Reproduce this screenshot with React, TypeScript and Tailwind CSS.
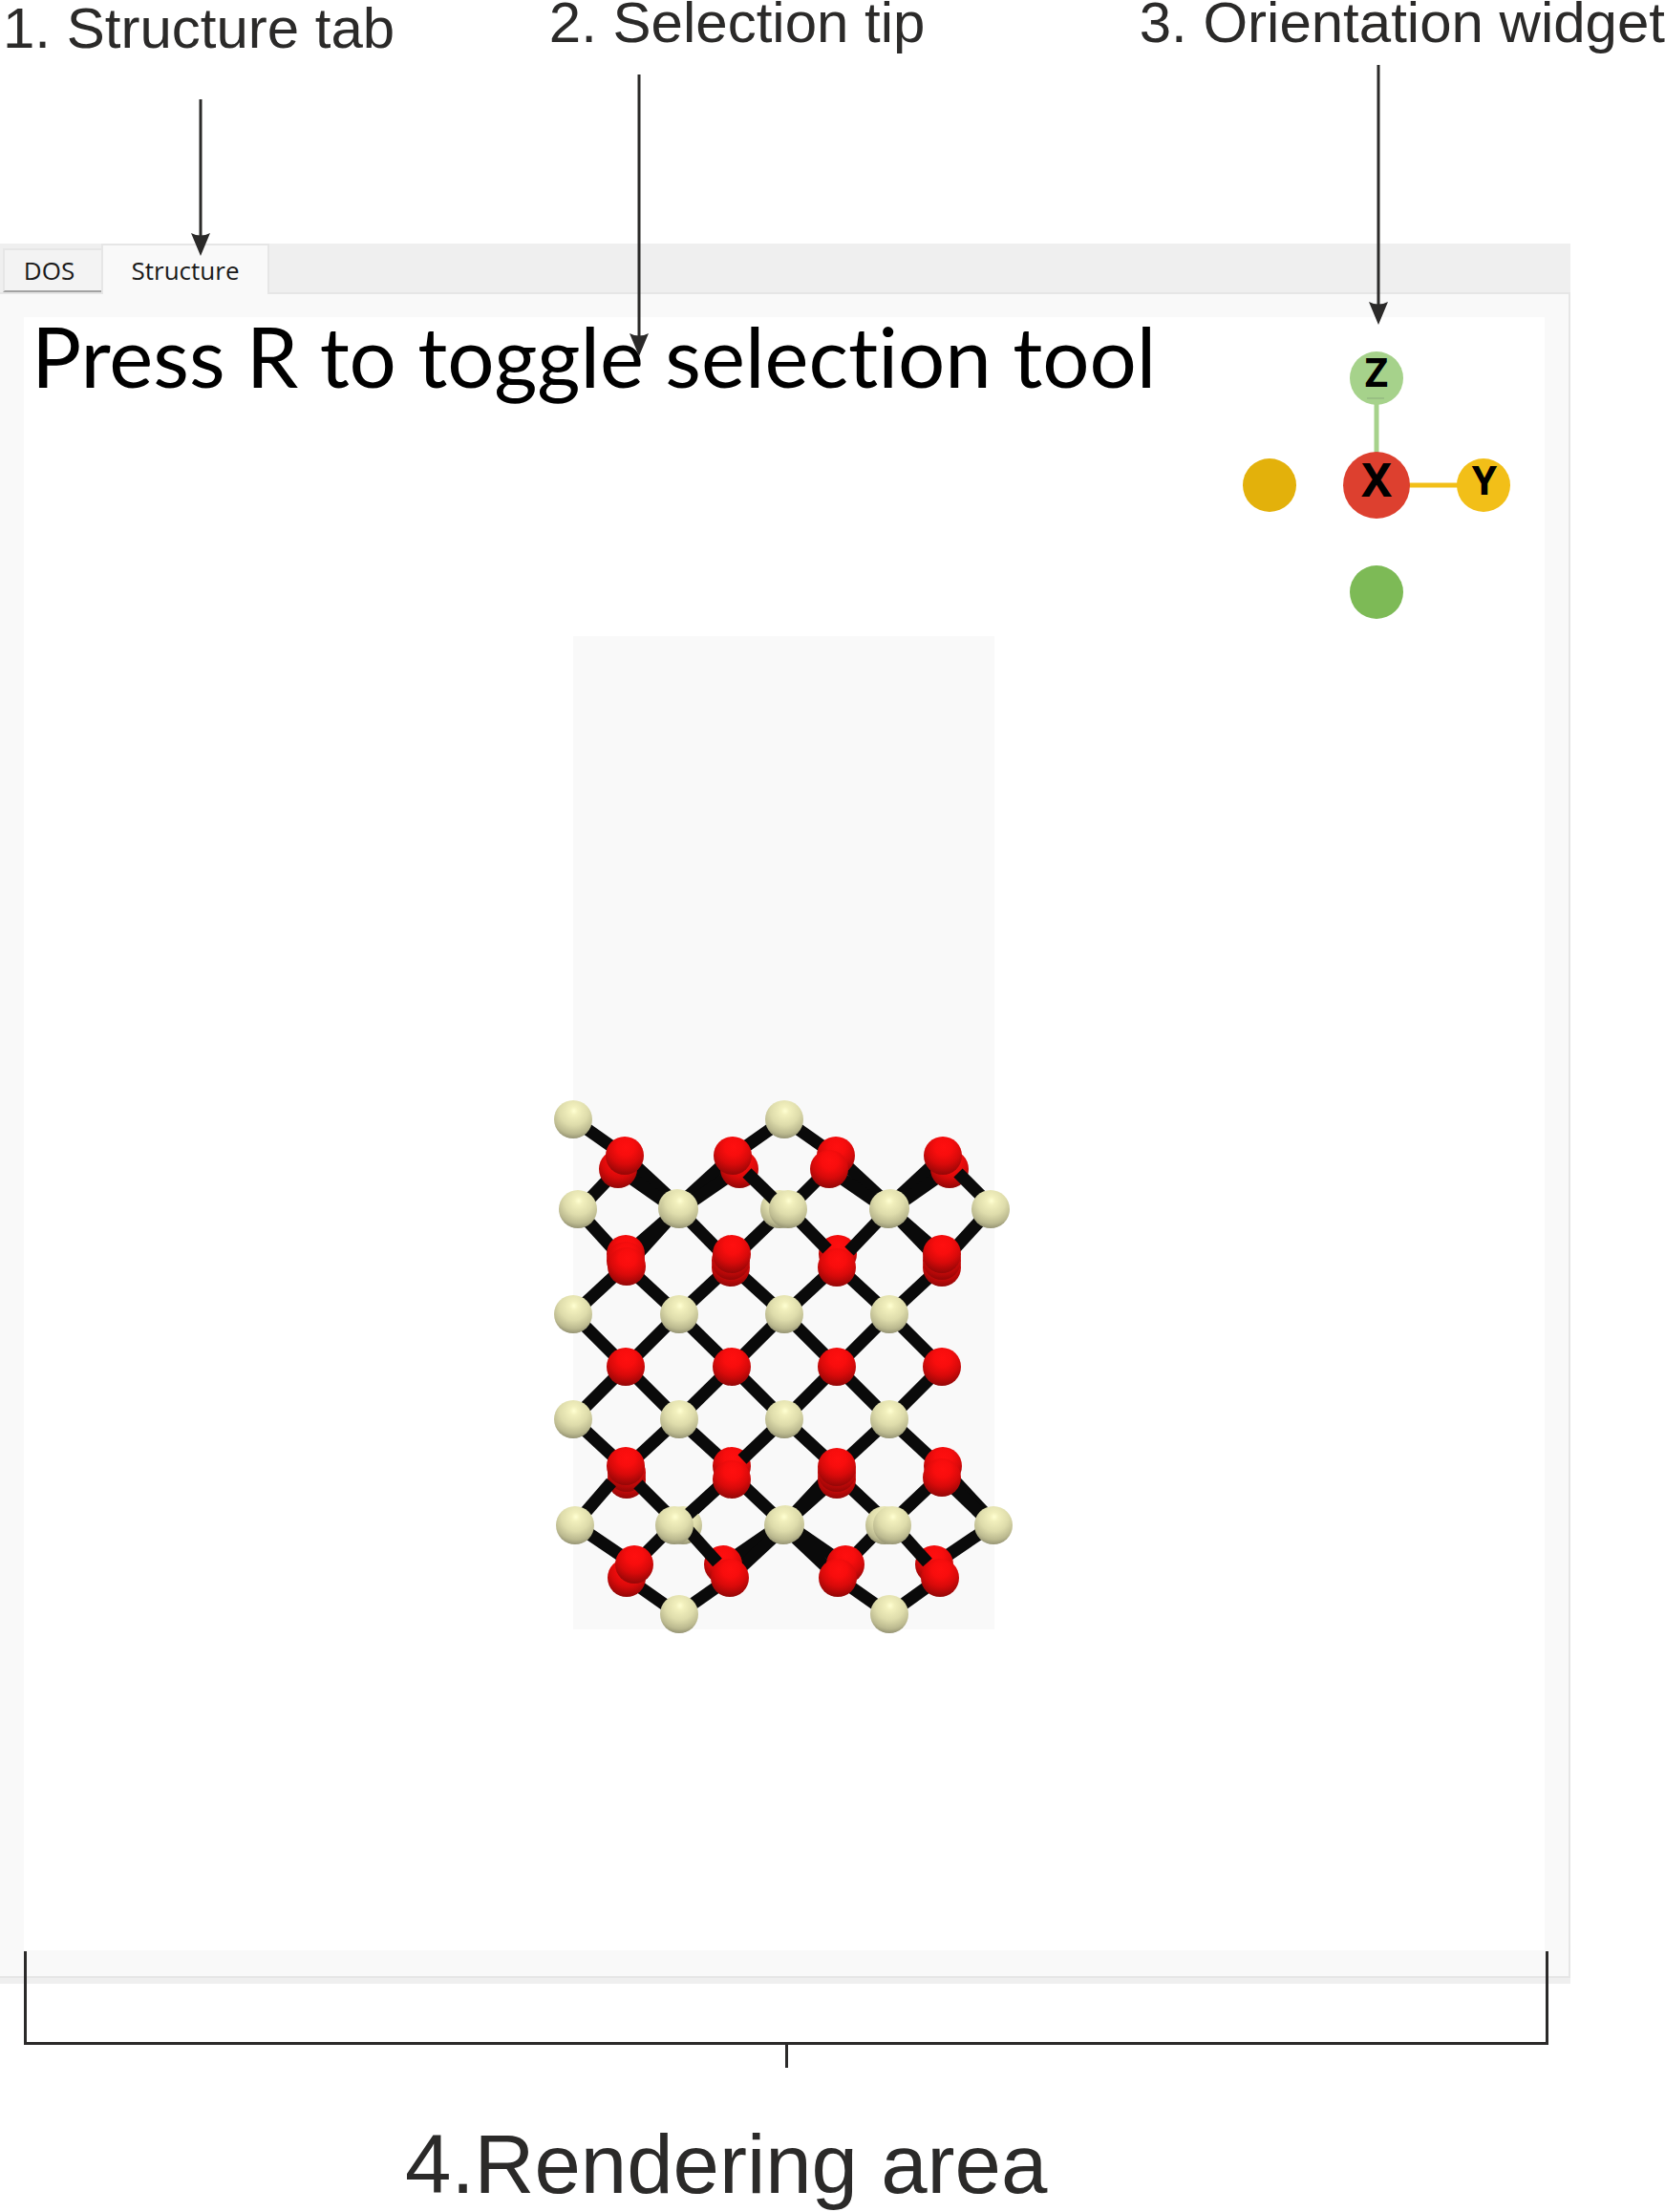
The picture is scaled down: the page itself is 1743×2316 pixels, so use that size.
import React from "react";

type Point = [number, number];
type Bond = [number, number, number, number];
type Atom = { kind: "metal" | "oxygen"; at: Point };

const BACK_BONDS: Bond[] = [
  // top surface
  [600, 1172, 654, 1210],
  [821, 1172, 767, 1210],
  [821, 1172, 875, 1210],
  [647, 1224, 607, 1266],
  [654, 1210, 710, 1262],
  [647, 1224, 710, 1268],
  [767, 1210, 710, 1262],
  [774, 1224, 710, 1268],
  [867, 1224, 825, 1266],
  [875, 1210, 931, 1262],
  [867, 1224, 931, 1268],
  [987, 1210, 931, 1262],
  [994, 1224, 931, 1268],
  // second oxygen layer
  [604, 1266, 655, 1322],
  [710, 1266, 655, 1314],
  [710, 1266, 655, 1327],
  [710, 1266, 765, 1322],
  [821, 1266, 765, 1320],
  [825, 1266, 876, 1318],
  [931, 1266, 986, 1314],
  [931, 1266, 986, 1323],
  [1037, 1266, 986, 1322],
  [600, 1376, 655, 1325],
  [710, 1376, 655, 1325],
  [710, 1376, 765, 1325],
  [821, 1376, 765, 1325],
  [821, 1376, 876, 1325],
  [931, 1376, 876, 1325],
  [931, 1376, 986, 1325],
  // middle oxygen layer
  [600, 1376, 655, 1431],
  [710, 1376, 655, 1431],
  [710, 1376, 766, 1431],
  [821, 1376, 766, 1431],
  [821, 1376, 876, 1431],
  [931, 1376, 876, 1431],
  [931, 1376, 986, 1431],
  [600, 1486, 655, 1431],
  [710, 1486, 655, 1431],
  [710, 1486, 766, 1431],
  [821, 1486, 766, 1431],
  [821, 1486, 876, 1431],
  [931, 1486, 876, 1431],
  [931, 1486, 986, 1431],
  // fourth oxygen layer
  [600, 1486, 655, 1537],
  [710, 1486, 655, 1537],
  [710, 1486, 766, 1537],
  [821, 1486, 876, 1537],
  [931, 1486, 876, 1537],
  [931, 1486, 986, 1537],
  [766, 1544, 710, 1596],
  [766, 1544, 821, 1596],
  [876, 1537, 821, 1596],
  [876, 1547, 821, 1596],
  [876, 1544, 931, 1596],
  [986, 1544, 931, 1596],
  [986, 1536, 1040, 1594],
  [986, 1546, 1040, 1598],
  // bottom surface
  [602, 1596, 664, 1638],
  [706, 1596, 664, 1638],
  [821, 1594, 757, 1638],
  [821, 1599, 764, 1652],
  [821, 1594, 885, 1638],
  [821, 1599, 877, 1652],
  [926, 1596, 885, 1638],
  [1040, 1596, 978, 1638],
  [656, 1652, 710, 1690],
  [764, 1652, 710, 1690],
  [877, 1652, 931, 1690],
  [984, 1652, 931, 1690],
];

const BACK_ATOMS: Atom[] = [
  { kind: "oxygen", at: [647, 1224] },
  { kind: "oxygen", at: [774, 1224] },
  { kind: "oxygen", at: [875, 1210] },
  { kind: "oxygen", at: [994, 1224] },
  { kind: "metal", at: [816, 1266] },
  { kind: "metal", at: [709, 1265] },
  { kind: "metal", at: [932, 1265] },
  { kind: "oxygen", at: [655, 1313] },
  { kind: "oxygen", at: [655, 1320] },
  { kind: "oxygen", at: [765, 1327] },
  { kind: "oxygen", at: [765, 1320] },
  { kind: "oxygen", at: [877, 1313] },
  { kind: "oxygen", at: [986, 1327] },
  { kind: "oxygen", at: [986, 1320] },
  { kind: "oxygen", at: [656, 1549] },
  { kind: "oxygen", at: [656, 1542] },
  { kind: "oxygen", at: [766, 1535] },
  { kind: "oxygen", at: [876, 1549] },
  { kind: "oxygen", at: [876, 1542] },
  { kind: "oxygen", at: [987, 1535] },
  { kind: "metal", at: [715, 1597] },
  { kind: "metal", at: [926, 1597] },
  { kind: "metal", at: [822, 1596] },
  { kind: "oxygen", at: [656, 1652] },
  { kind: "oxygen", at: [757, 1638] },
  { kind: "oxygen", at: [885, 1638] },
  { kind: "oxygen", at: [978, 1638] },
];

const FRONT_BONDS: Bond[] = [
  [782, 1228, 821, 1266],
  [1003, 1228, 1037, 1262],
  [825, 1266, 866, 1308],
  [931, 1266, 889, 1310],
  [821, 1486, 777, 1528],
  [640, 1552, 602, 1596],
  [668, 1554, 710, 1596],
  [720, 1586, 760, 1550],
  [715, 1596, 751, 1636],
  [935, 1596, 971, 1636],
];

const FRONT_ATOMS: Atom[] = [
  { kind: "metal", at: [600, 1172] },
  { kind: "metal", at: [821, 1172] },
  { kind: "oxygen", at: [654, 1210] },
  { kind: "oxygen", at: [767, 1210] },
  { kind: "oxygen", at: [868, 1224] },
  { kind: "oxygen", at: [987, 1210] },
  { kind: "metal", at: [605, 1266] },
  { kind: "metal", at: [711, 1266] },
  { kind: "metal", at: [825, 1266] },
  { kind: "metal", at: [930, 1266] },
  { kind: "metal", at: [1037, 1266] },
  { kind: "oxygen", at: [656, 1326] },
  { kind: "oxygen", at: [766, 1313] },
  { kind: "oxygen", at: [876, 1327] },
  { kind: "oxygen", at: [986, 1313] },
  { kind: "metal", at: [600, 1376] },
  { kind: "metal", at: [711, 1376] },
  { kind: "metal", at: [821, 1376] },
  { kind: "metal", at: [931, 1376] },
  { kind: "oxygen", at: [655, 1431] },
  { kind: "oxygen", at: [766, 1431] },
  { kind: "oxygen", at: [876, 1431] },
  { kind: "oxygen", at: [986, 1431] },
  { kind: "metal", at: [600, 1486] },
  { kind: "metal", at: [711, 1486] },
  { kind: "metal", at: [821, 1486] },
  { kind: "metal", at: [931, 1486] },
  { kind: "oxygen", at: [655, 1535] },
  { kind: "oxygen", at: [766, 1549] },
  { kind: "oxygen", at: [876, 1536] },
  { kind: "oxygen", at: [986, 1547] },
  { kind: "metal", at: [602, 1597] },
  { kind: "metal", at: [706, 1597] },
  { kind: "metal", at: [820, 1597] },
  { kind: "metal", at: [934, 1597] },
  { kind: "metal", at: [1040, 1597] },
  { kind: "oxygen", at: [664, 1638] },
  { kind: "oxygen", at: [764, 1652] },
  { kind: "oxygen", at: [877, 1652] },
  { kind: "oxygen", at: [984, 1652] },
  { kind: "metal", at: [711, 1690] },
  { kind: "metal", at: [931, 1690] },
];

function Bonds({ items }: { items: Bond[] }) {
  return (
    <g stroke="#0a0a0a" strokeWidth="13">
      {items.map(([x1, y1, x2, y2], i) => (
        <line key={i} x1={x1} y1={y1} x2={x2} y2={y2} />
      ))}
    </g>
  );
}

function Atoms({ items }: { items: Atom[] }) {
  return (
    <g>
      {items.map(({ kind, at }, i) => (
        <circle key={i} cx={at[0]} cy={at[1]} r="20" fill={kind === "metal" ? "url(#metal)" : "url(#oxygen)"} />
      ))}
    </g>
  );
}

function CrystalStructure() {
  return (
    <svg className="h-[1060px] w-[500px]" viewBox="571 660 500 1060" role="img" aria-label="Crystal structure">
      <defs>
        <radialGradient id="metal" cx="0.52" cy="0.28" r="0.75">
          <stop offset="0" stopColor="#ffffd2" />
          <stop offset="0.15" stopColor="#f2f0bd" />
          <stop offset="0.5" stopColor="#dedcab" />
          <stop offset="0.8" stopColor="#bbb98f" />
          <stop offset="1" stopColor="#8c8a6c" />
        </radialGradient>
        <radialGradient id="oxygen" cx="0.52" cy="0.28" r="0.75">
          <stop offset="0" stopColor="#ff0f0f" />
          <stop offset="0.3" stopColor="#f80d0d" />
          <stop offset="0.6" stopColor="#d80a0a" />
          <stop offset="1" stopColor="#8c0606" />
        </radialGradient>
      </defs>
      <rect x="600" y="666" width="441" height="1040" fill="#f9f9f9" />
      <Bonds items={BACK_BONDS} />
      <Atoms items={BACK_ATOMS} />
      <Bonds items={FRONT_BONDS} />
      <Atoms items={FRONT_ATOMS} />
    </svg>
  );
}

function OrientationWidget() {
  return (
    <svg
      className="h-[282px] w-[282px] shrink-0 font-['Noto_Sans',sans-serif] font-bold"
      viewBox="0 0 282 282"
      role="img"
      aria-label="Orientation widget"
    >
      <line x1="141" y1="28" x2="141" y2="141" stroke="#a6d28b" strokeWidth="5" />
      <line x1="141" y1="141" x2="253" y2="141" stroke="#f2bf18" strokeWidth="5" />
      <circle cx="141" cy="29" r="28" fill="#a6d28b" />
      <circle cx="29" cy="141" r="28" fill="#e3b10b" />
      <circle cx="253" cy="141" r="28" fill="#f2bf18" />
      <circle cx="141" cy="253" r="28" fill="#7dba56" />
      <circle cx="141" cy="141" r="35" fill="#dd402f" />
      <line x1="131" y1="50" x2="149" y2="50" stroke="#99c083" strokeWidth="2" />
      <text x="141" y="38" fontSize="42" textAnchor="middle">Z</text>
      <text x="141" y="153" fontSize="48" textAnchor="middle">X</text>
      <text x="254" y="151" fontSize="42" textAnchor="middle">Y</text>
    </svg>
  );
}

function Arrow({ length, className }: { length: number; className: string }) {
  return (
    <svg className={"absolute " + className} width="22" height={length} aria-hidden="true">
      <line x1="11" y1="0" x2="11" y2={length - 18} stroke="#2b2a29" strokeWidth="3" />
      <path
        d={`M11 ${length} L1 ${length - 24} Q11 ${length - 19} 21 ${length - 24} Z`}
        fill="#2b2a29"
      />
    </svg>
  );
}

export default function App() {
  return (
    <main className="min-h-screen w-full bg-white font-['Liberation_Sans',Arial,sans-serif] text-[#2b2a29]">
      <header className="relative z-10 grid h-[255px] grid-cols-[575fr_618fr_550fr] text-[60px] leading-[48px] whitespace-nowrap">
        <div className="relative pt-1.5 pl-[3px]">
          <p>1. Structure tab</p>
          <Arrow length={164} className="top-[104px] left-[199px]" />
        </div>
        <div className="relative">
          <p>2. Selection tip</p>
          <Arrow length={295} className="top-[78px] left-[83px]" />
        </div>
        <div className="relative">
          <p>3. Orientation widget</p>
          <Arrow length={272} className="top-[68px] left-[239px]" />
        </div>
      </header>

      <section className="mr-[99px] bg-[#efefef] pb-1.5">
        <div
          role="tablist"
          className="flex h-[51px] items-end font-['Open_Sans',sans-serif] text-[26px] leading-[34px] text-[#1a1a1a]"
        >
          <button
            role="tab"
            aria-selected="false"
            className="ml-[3px] h-[46px] w-[103px] border-t-2 border-l-2 border-[#e6e6e6] border-b-2 border-b-[#a3a3a3] bg-[#f3f3f3] pr-2"
          >
            DOS
          </button>
          <button
            role="tab"
            aria-selected="true"
            className="relative -mb-0.5 h-[53px] w-[176px] border-x-2 border-t-2 border-[#e6e6e6] bg-[#f9f9f9]"
          >
            Structure
          </button>
        </div>
        <div
          role="tabpanel"
          className="border-t-2 border-r-2 border-b-2 border-[#e6e6e6] bg-[#f9f9f9] pt-6 pr-[25px] pb-[27px] pl-[25px]"
        >
          <div className="bg-white pb-[322px]">
            <div className="flex h-[328px] items-start justify-between pr-[35px] pl-2">
              <p className="font-['Lato',sans-serif] text-[87px] leading-[82px] whitespace-nowrap text-black [font-variant-ligatures:none]">
                Press R to toggle selection tool
              </p>
              <div className="pt-[35px]">
                <OrientationWidget />
              </div>
            </div>
            <div className="flex justify-center">
              <CrystalStructure />
            </div>
          </div>
        </div>
      </section>

      <footer>
        <div className="relative -mt-[34px] mr-[122px] ml-[25px]">
          <div className="h-[98px] border-x-[3px] border-b-[3px] border-[#2b2a29]" />
          <div className="mx-auto h-6 w-[3px] bg-[#2b2a29]" />
        </div>
        <p className="mt-[57px] pl-[424px] text-[87px] leading-[88px] whitespace-nowrap">4.Rendering area</p>
      </footer>
    </main>
  );
}
